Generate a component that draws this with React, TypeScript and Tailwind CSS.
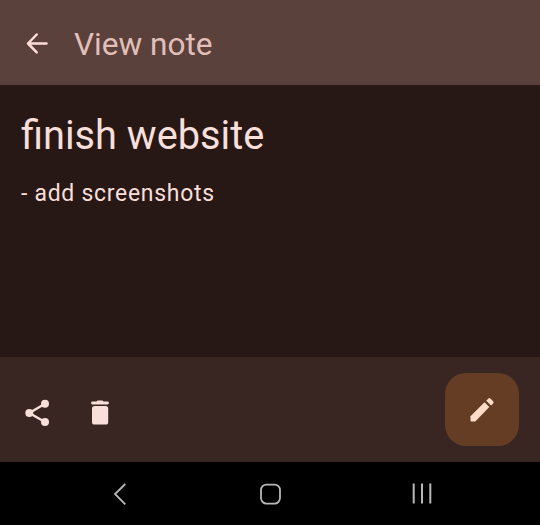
export default function App() {
  return (
    <main className="flex h-[525px] w-[540px] flex-col overflow-hidden bg-[#271815] font-['Roboto',sans-serif]">
      <header className="flex h-[85px] shrink-0 items-center bg-[#5b413c] pl-[23px] pt-[3px]">
        <svg className="-mt-[2px] size-[29px]" viewBox="0 0 29 29" fill="none" stroke="#ffded8" strokeWidth="2.5" strokeLinecap="round" strokeLinejoin="round"><path d="M23.5 14.5H5M13.7 5.5L5 14.5l8.7 8.8" /></svg>
        <h1 className="ml-[22px] mt-px origin-left scale-x-[0.98] text-[32.2px] leading-none text-[#e2bfb8]">View note</h1>
      </header>
      <section className="h-[272px] shrink-0 pl-[21px] pt-[26px] text-[#f9dfda]">
        <h2 className="w-fit origin-left scale-x-[0.969] text-[41px] leading-[48px]">finish website</h2>
        <p className="mt-[20px] w-fit origin-left scale-x-[0.98] text-[23.4px] leading-[28px] tracking-[0.75px]">- add screenshots</p>
      </section>
      <footer className="flex h-[105px] shrink-0 items-center bg-[#392622] pl-[22px] pr-[21.5px]">
        <svg className="mt-[6px] h-[32px] w-[30px]" viewBox="0 0 30 32" fill="#f9dfda"><path d="M23 6.8L7.3 16 23 25" fill="none" stroke="#f9dfda" strokeWidth="2.4" /><circle cx="23" cy="6.8" r="4" /><circle cx="7.3" cy="16" r="4" /><circle cx="23" cy="25" r="4" /></svg>
        <svg className="ml-[32px] mt-[6px] size-[32px] fill-[#f9dfda]" viewBox="0 0 32 32"><path d="M8.5 4.6h4l1-1.2h5l1 1.2h4a1.4 1.4 0 0 1 0 2.8h-15a1.4 1.4 0 0 1 0-2.8z" /><rect x="8" y="8.9" width="16.2" height="18.6" rx="2.6" /></svg>
        <button className="ml-auto flex h-[73.5px] w-[73.5px] items-center justify-center rounded-[21px] bg-[#653d25]">
          <svg className="size-[32px] fill-[#ffdcc7]" viewBox="0 0 32 32"><path d="M4.5 22.2L18.5 8.2l4.8 4.8L9.3 27.5H5.5q-1 0-1-1z" /><path d="M20.2 6.7l2-2q1.2-1.2 2.4 0l2.5 2.5q1.2 1.2 0 2.4l-2 2z" /></svg>
        </button>
      </footer>
      <nav className="flex h-[63px] shrink-0 items-center bg-black pl-[110px] text-[#b8b8b8]">
        <svg className="h-[26px] w-[20px]" viewBox="0 0 20 26" fill="none" stroke="currentColor" strokeWidth="1.8"><path d="M15.3 3L5 13l10.3 10.3" /></svg>
        <svg className="ml-[128px] size-[24px]" viewBox="0 0 24 24" fill="none" stroke="currentColor" strokeWidth="1.8"><rect x="3" y="2.6" width="19" height="19" rx="5.5" /></svg>
        <svg className="ml-[129px] size-[22px]" viewBox="0 0 22 22" fill="none" stroke="currentColor" strokeWidth="2"><path d="M2.7 .5v20M11 .5v20M19.3 .5v20" /></svg>
      </nav>
    </main>
  )
}
